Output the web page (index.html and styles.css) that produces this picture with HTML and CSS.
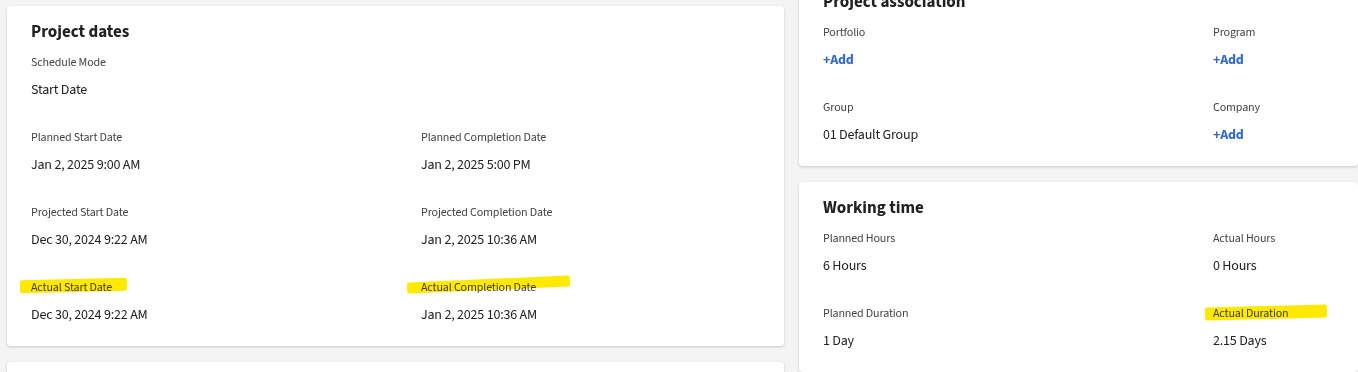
FILE: index.html
```html
<!DOCTYPE html>
<html lang="en">
<head>
  <meta charset="UTF-8" />
  <meta name="viewport" content="width=device-width, initial-scale=1" />
  <title>Project details</title>
  <link rel="stylesheet" href="styles.css">
</head>
<body>
  <div class="page">
    <div class="col col-left">
      <section class="card">
        <h2 class="card-title">Project dates</h2>
        <div class="fields">
          <div class="field field-wide">
            <div class="label">Schedule Mode</div>
            <div class="value">Start Date</div>
          </div>
          <div class="field">
            <div class="label">Planned Start Date</div>
            <div class="value">Jan 2, 2025 9:00 AM</div>
          </div>
          <div class="field">
            <div class="label">Planned Completion Date</div>
            <div class="value">Jan 2, 2025 5:00 PM</div>
          </div>
          <div class="field">
            <div class="label">Projected Start Date</div>
            <div class="value">Dec 30, 2024 9:22 AM</div>
          </div>
          <div class="field">
            <div class="label">Projected Completion Date</div>
            <div class="value">Jan 2, 2025 10:36 AM</div>
          </div>
          <div class="field">
            <div class="label"><span class="mark mark-start"></span>Actual Start Date</div>
            <div class="value">Dec 30, 2024 9:22 AM</div>
          </div>
          <div class="field">
            <div class="label"><span class="mark mark-completion"></span>Actual Completion Date</div>
            <div class="value">Jan 2, 2025 10:36 AM</div>
          </div>
        </div>
      </section>
      <section class="card card-stub"></section>
    </div>

    <div class="col col-right">
      <section class="card">
        <h2 class="card-title">Project association</h2>
        <div class="fields">
          <div class="field">
            <div class="label">Portfolio</div>
            <div class="value"><a class="add" href="#">+Add</a></div>
          </div>
          <div class="field">
            <div class="label">Program</div>
            <div class="value"><a class="add" href="#">+Add</a></div>
          </div>
          <div class="field">
            <div class="label">Group</div>
            <div class="value">01 Default Group</div>
          </div>
          <div class="field">
            <div class="label">Company</div>
            <div class="value"><a class="add" href="#">+Add</a></div>
          </div>
        </div>
      </section>
      <section class="card">
        <h2 class="card-title">Working time</h2>
        <div class="fields">
          <div class="field">
            <div class="label">Planned Hours</div>
            <div class="value">6 Hours</div>
          </div>
          <div class="field">
            <div class="label">Actual Hours</div>
            <div class="value">0 Hours</div>
          </div>
          <div class="field">
            <div class="label">Planned Duration</div>
            <div class="value">1 Day</div>
          </div>
          <div class="field">
            <div class="label"><span class="mark mark-duration"></span>Actual Duration</div>
            <div class="value">2.15 Days</div>
          </div>
        </div>
      </section>
    </div>
  </div>
</body>
</html>
```

FILE: styles.css
```css
/* Project details panels */
html, body {
  height: 100%;
}
body {
  margin: 0;
  background: #f4f4f4;
  color: #222;
  font-family: "Source Sans 3", Lato, sans-serif;
  overflow: hidden;
}
.page {
  display: grid;
  grid-template-columns: 777px 1fr;
  column-gap: 15px;
  align-items: start;
  padding: 6px 0 0 7px;
}
.col {
  display: flex;
  flex-direction: column;
}
.col-left {
  gap: 16px;
}
.col-right {
  gap: 16px;
  margin-top: -30px;
}
.card {
  background: #fff;
  border-radius: 4px;
  box-shadow: 0 1px 3px rgba(0, 0, 0, 0.18);
  padding: 15px 24px 21px 24px;
}
.card-stub {
  height: 60px;
  padding: 0;
}
.card-title {
  margin: 0 0 10px 0;
  font-size: 17px;
  line-height: 22px;
  font-weight: 700;
  color: #222;
}
.fields {
  display: grid;
  grid-template-columns: 390px 1fr;
  row-gap: 28px;
}
.field-wide {
  grid-column: 1 / -1;
}
.label {
  position: relative;
  font-size: 12px;
  line-height: 18px;
  letter-spacing: -0.15px;
  color: #444;
  padding-top: 1px;
  margin-bottom: 8px;
}
.value {
  font-size: 14px;
  line-height: 20px;
  letter-spacing: -0.2px;
  color: #222;
}
.add {
  color: #3168d3;
  font-weight: 700;
  text-decoration: none;
}
/* yellow marker strokes over some labels */
.mark {
  position: absolute;
  background: #ffe900;
  mix-blend-mode: multiply;
  border-radius: 2px;
}
.mark-start {
  left: -11px;
  top: 1px;
  width: 107px;
  height: 13px;
  transform: rotate(-1.5deg);
}
.mark-completion {
  left: -14px;
  top: 1px;
  width: 163px;
  height: 11px;
  transform: rotate(-2.5deg);
}
.mark-duration {
  left: -8px;
  top: 2px;
  width: 122px;
  height: 13px;
  transform: rotate(-1.5deg);
}
```
